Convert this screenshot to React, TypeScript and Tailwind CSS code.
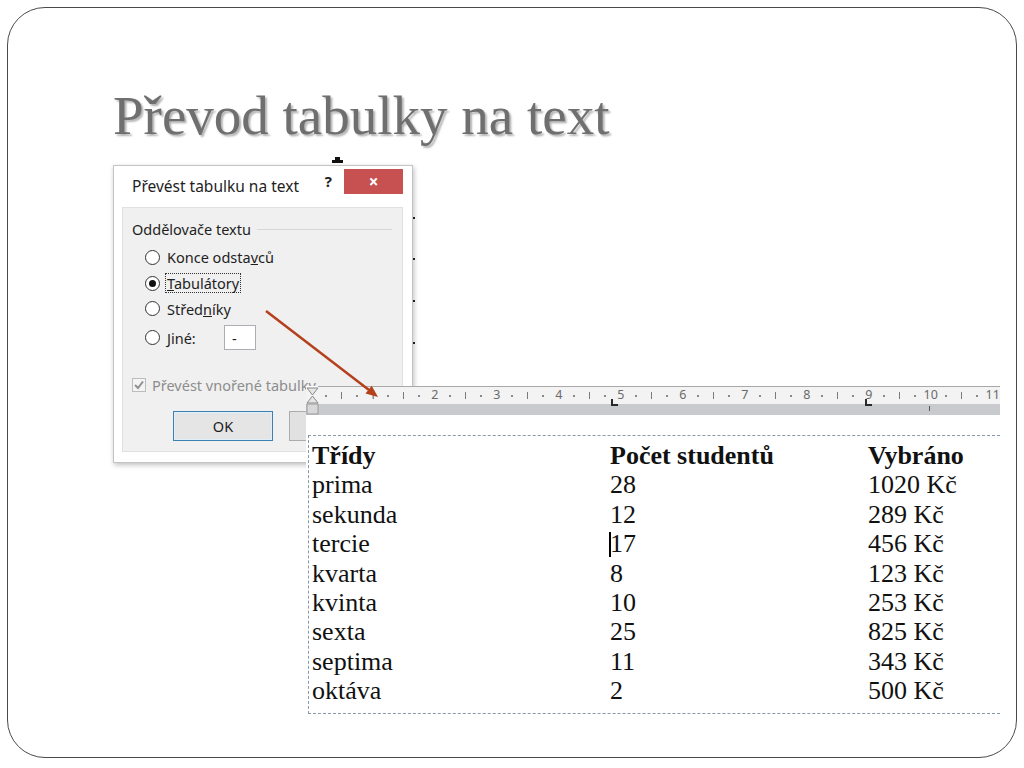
import type { ReactNode } from 'react'

const rows = [
  ['prima', '28', '1020 Kč'],
  ['sekunda', '12', '289 Kč'],
  ['tercie', '17', '456 Kč'],
  ['kvarta', '8', '123 Kč'],
  ['kvinta', '10', '253 Kč'],
  ['sexta', '25', '825 Kč'],
  ['septima', '11', '343 Kč'],
  ['oktáva', '2', '500 Kč'],
]

function Slot({ children }: { children: ReactNode }) {
  return <span className="w-[15.5px] shrink-0 flex justify-center items-center whitespace-nowrap">{children}</span>
}

const Dot = () => (
  <Slot>
    <span className="w-[2px] h-[2px] bg-[#8a8a8a]" />
  </Slot>
)
const Tick = () => (
  <Slot>
    <span className="w-px h-[7px] bg-[#7a7a7a]" />
  </Slot>
)

function Radio({ checked }: { checked?: boolean }) {
  return (
    <span className="w-[15px] h-[15px] rounded-full border border-[#333] bg-white flex items-center justify-center shrink-0">
      {checked && <span className="w-[7px] h-[7px] rounded-full bg-[#111]" />}
    </span>
  )
}

function Dialog() {
  return (
    <div className="absolute left-[113px] top-[165px] w-[300px] h-[298px] bg-white border border-[#c4c4c4] shadow-[1px_2px_5px_rgba(0,0,0,0.25)] font-['Noto_Sans',sans-serif] text-[14.5px] text-[#1e1e1e]">
      {/* titulek */}
      <div className="h-[41px] flex items-start">
        <span className="ml-[18px] mt-[10px] text-[15.5px] leading-[21px]">Převést tabulku na text</span>
        <span className="ml-auto mt-[5px] font-bold text-[15px] leading-[20px] text-[#222]">?</span>
        <div className="ml-[12px] mr-[9px] mt-[3px] w-[59px] h-[25px] bg-[#c75050] flex items-center justify-center text-white text-[17px] font-bold leading-none">
          ×
        </div>
      </div>
      {/* panel */}
      <div className="ml-[8px] w-[281px] h-[245px] bg-[#f0f0f0] border border-[#e0e0e0] flex flex-col leading-[20px]">
        <div className="mt-[11px] h-[20px] flex items-center pl-[9px] pr-[10px] gap-[6px]">
          <span>Oddělovače textu</span>
          <span className="flex-1 h-px bg-[#d8d8d8]" />
        </div>
        <div className="mt-[5px] pl-[22px] flex flex-col">
          <div className="h-[26px] flex items-center gap-[7px]">
            <Radio />
            <span>
              Konce odsta<span className="underline">v</span>ců
            </span>
          </div>
          <div className="h-[26px] flex items-center gap-[6px]">
            <Radio checked />
            <span className="outline-1 outline-dotted outline-[#333] px-px leading-[18px]">
              <span className="underline">T</span>abulátory
            </span>
          </div>
          <div className="h-[25px] flex items-center gap-[7px]">
            <Radio />
            <span>
              Střed<span className="underline">n</span>íky
            </span>
          </div>
          <div className="mt-[4px] h-[25px] flex items-center gap-[7px]">
            <Radio />
            <span className="w-[50px]">
              <span className="underline">J</span>iné:
            </span>
            <span className="w-[32px] h-[25px] bg-white border border-[#abadb3] flex items-center pl-[7px]">-</span>
          </div>
        </div>
        <div className="mt-[25px] h-[20px] pl-[9px] flex items-center gap-[6px] text-[#8d8d8d]">
          <span className="w-[14px] h-[14px] border border-[#bcbcbc] bg-[#f4f4f4] flex items-center justify-center shrink-0">
            <svg width="12" height="12" viewBox="0 0 12 12">
              <path d="M2 6 L5 9 L10 2.5" fill="none" stroke="#8f8f8f" strokeWidth="2" />
            </svg>
          </span>
          <span className="whitespace-nowrap">Převést vnořené tabulky</span>
        </div>
        <div className="mt-[16px] flex pl-[50px] gap-[16px]">
          <div className="w-[100px] h-[30px] border border-[#3c7fb1] bg-[#e5e5e5] shadow-[inset_0_0_0_1px_#dff0fc] flex items-center justify-center">
            OK
          </div>
          <div className="w-[100px] h-[30px] border border-[#acacac] bg-[#e1e1e1]" />
        </div>
      </div>
    </div>
  )
}

function WordPage() {
  return (
    <div className="absolute left-[306px] top-[386px] w-[694px] h-[332px] bg-white overflow-hidden">
      {/* pravítko */}
      <div className="relative">
        <div className="h-px bg-[#a9a9a9] ml-[12px]" />
        <div className="h-[17px] bg-[#f3f3f3] flex items-center text-[12.5px] text-[#6a6a6a] font-['Noto_Sans',sans-serif] leading-none">
          <span className="w-[12.5px] shrink-0" />
          <Dot />
          <Tick />
          <Dot />
          {Array.from({ length: 11 }, (_, i) => (
            <span key={i} className="flex shrink-0">
              <Slot>{i + 1}</Slot>
              <Dot />
              <Tick />
              <Dot />
            </span>
          ))}
        </div>
        <div className="h-[11px] bg-[#c9cacd]" />
        <svg className="absolute left-0 top-0" width="13" height="30" viewBox="0 0 13 30">
          <path d="M1 2 L12 2 L6.5 9 Z" fill="#e6e6e6" stroke="#8a8a8a" strokeWidth="1" />
          <path d="M6.5 10 L12 17 L1 17 Z" fill="#e6e6e6" stroke="#8a8a8a" strokeWidth="1" />
          <rect x="1" y="18" width="11" height="10" fill="#d8d8d8" stroke="#9a9a9a" strokeWidth="1" />
        </svg>
        <span className="absolute left-[305px] top-[13px] w-[7px] h-[7px] border-l-2 border-b-2 border-[#2a2a2a]" />
        <span className="absolute left-[559px] top-[13px] w-[7px] h-[7px] border-l-2 border-b-2 border-[#2a2a2a]" />
        <span className="absolute left-[623px] top-[20px] w-px h-[5px] bg-[#555]" />
      </div>
      {/* stránka */}
      <div className="h-[20px]" />
      <div className="ml-[2px] border-t border-l border-b border-dashed border-[#8a98ae] pt-[5px] pb-[7px] pl-[3px] font-['Liberation_Serif','Times_New_Roman',serif] text-[26px] text-[#111] leading-[29.4px]">
        <div className="grid grid-cols-[298px_258px_1fr] font-bold">
          <span>Třídy</span>
          <span>Počet studentů</span>
          <span>Vybráno</span>
        </div>
        {rows.map(([a, b, c]) => (
          <div key={a} className="grid grid-cols-[298px_258px_1fr]">
            <span>{a}</span>
            <span className="relative">
              {a === 'tercie' && <span className="absolute left-[-1px] top-[3px] w-[2px] h-[25px] bg-black" />}
              {b}
            </span>
            <span>{c}</span>
          </div>
        ))}
      </div>
    </div>
  )
}

export default function App() {
  return (
    <div className="relative w-[1024px] h-[768px] bg-white overflow-hidden pt-[7px] pl-[7px] pr-[7px] pb-[10px]">
      <div className="h-full border border-[#4a4a4a] rounded-[38px] pt-[80px] pl-[105px]">
        <h1 className="font-['Liberation_Serif','Times_New_Roman',serif] text-[55px] leading-none text-[#6f6f6f] [text-shadow:2px_2px_2px_rgba(0,0,0,0.3)]">
          Převod tabulky na text
        </h1>
      </div>

      {/* podklad pod dialogem */}
      <span className="absolute left-[335px] top-[157px] w-[5px] h-[3px] bg-[#111]" />
      <span className="absolute left-[332px] top-[160px] w-[11px] h-[3px] bg-[#111]" />
      {[217, 258, 300, 342].map(y => (
        <span key={y} className="absolute left-[413px] w-[2px] h-[2px] bg-[#222]" style={{ top: y }} />
      ))}

      <Dialog />
      <WordPage />

      <svg className="absolute left-0 top-0 pointer-events-none" width="1024" height="768">
        <line x1="266" y1="311" x2="369" y2="390" stroke="#b5401c" strokeWidth="2.5" />
        <path d="M378 397 L365.5 393.5 L371.7 385.7 Z" fill="#b5401c" />
      </svg>
    </div>
  )
}
